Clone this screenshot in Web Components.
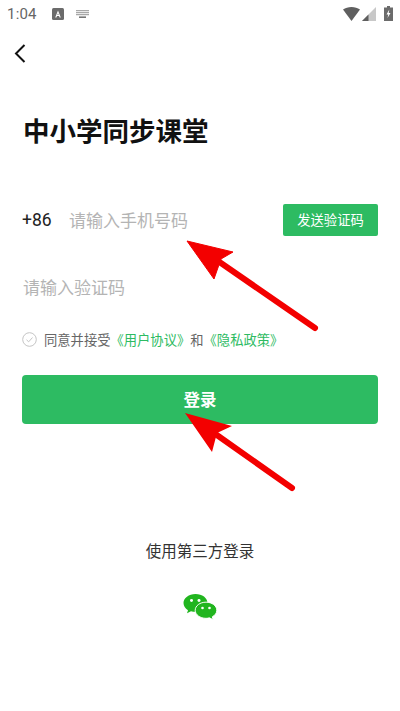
<!DOCTYPE html>
<html lang="zh-CN">
<head>
<meta charset="UTF-8">
<title>中小学同步课堂</title>
<style>
    html, body { margin: 0; background: #fff; }
    body { font-family: "Noto Sans CJK SC", "Roboto", sans-serif; }
</style>
</head>
<body>
<login-screen>
    <status-bar time="1:04"></status-bar>
    <back-bar></back-bar>
    <page-title>中小学同步课堂</page-title>
    <phone-row></phone-row>
    <code-row></code-row>
    <agree-row></agree-row>
    <login-button>登录</login-button>
    <third-party></third-party>
</login-screen>
<arrow-layer></arrow-layer>

<script>
    "use strict";
    function define(name, html, init) {
        customElements.define(name, class extends HTMLElement {
            constructor() {
                super();
                this.attachShadow({ mode: "open" }).innerHTML = html;
            }
            connectedCallback() {
                if (init) init(this);
            }
        });
    }

    define("login-screen", `
        <style>
            :host { display: flex; flex-direction: column; width: 400px; height: 711px; overflow: hidden; }
        </style>
        <slot></slot>`);

    define("status-bar", `
        <style>
            :host { display: flex; align-items: center; height: 27px; padding: 0 7px 0 7px; box-sizing: border-box;
                    font: 15px Roboto, sans-serif; color: #666; }
            #t { width: 45px; letter-spacing: .2px; }
            .right { margin-left: auto; display: flex; align-items: center; }
            svg { display: block; }
        </style>
        <span id="t"></span>
        <svg width="12" height="12" viewBox="0 0 12 12"><rect width="12" height="12" rx="1.5" fill="#6b6b6b"/><path d="M3.2 9.5 6 2.6l2.8 6.9H7.6L7 8H5l-.6 1.5zM5.4 7h1.2L6 5.2z" fill="#fff"/></svg>
        <svg width="15" height="8" viewBox="0 0 15 8" style="margin-left:11px">
            <path d="M1 0h13v1.200H1zM1 2h13v1.200H1zM1 4h13v1.200H1z" fill="#a8a8a8"/>
            <path d="M4 6.400h7V8H4z" fill="#777"/>
        </svg>
        <span class="right">
            <svg width="17" height="14" viewBox="0 0 17 14"><path d="M0 2.500C2.300 .9 5.300 0 8.500 0s6.200 .9 8.500 2.500L8.500 14z" fill="#5f5f5f"/></svg>
            <svg width="14" height="14" viewBox="0 0 14 14" style="margin-left:2px"><path d="M14 0v14H0z" fill="#c8c8c8"/><path d="M6.500 7.500V14H0z" fill="#5f5f5f"/></svg>
            <svg width="9" height="15" viewBox="0 0 9 15" style="margin-left:8px"><path d="M3 0h3v1.500h3V15H0V1.500h3z" fill="#6b6b6b"/><path d="M5.300 3.500 2.500 8.500h1.800L3.500 12l3-5H4.700z" fill="#fff"/></svg>
        </span>`,
        el => { el.shadowRoot.getElementById("t").textContent = el.getAttribute("time"); });

    define("back-bar", `
        <style>
            :host { display: block; height: 53px; padding-left: 14px; }
            svg { display: block; margin-top: 17px; }
        </style>
        <svg width="12" height="19" viewBox="0 0 12 19"><path d="M10.500 1 2 9.500l8.500 8.500" fill="none" stroke="#111" stroke-width="2"/></svg>`);

    define("page-title", `
        <style>
            :host { display: block; padding: 0 0 0 23px; height: 53px; line-height: 53px; margin-top: 23px;
                    font-size: 26.500px; font-weight: 700; color: #111; }
        </style>
        <slot></slot>`);

    define("phone-row", `
        <style>
            :host { display: flex; align-items: center; margin: 48px 22px 0 22px; height: 32px; }
            .cc { width: 47px; font: 17.500px Roboto, sans-serif; color: #222; }
            .ph { flex: 1; font-size: 17px; color: #b4b4b4; padding-bottom: 2px; }
            button { all: unset; width: 95px; height: 32px; line-height: 32px; text-align: center; background: #2dbb62;
                     color: #fff; font-size: 13.300px; border-radius: 2px; }
        </style>
        <span class="cc">+86</span>
        <span class="ph">请输入手机号码</span>
        <button>发送验证码</button>`);

    define("code-row", `
        <style>
            :host { display: block; margin: 35px 0 0 23px; height: 32px; line-height: 32px; font-size: 17px; color: #b4b4b4; }
        </style>
        请输入验证码`);

    define("agree-row", `
        <style>
            :host { display: flex; align-items: center; margin: 26px 0 0 22px; height: 20px; font-size: 13.300px; color: #666; }
            svg { margin-right: 7px; flex: none; }
            a { color: #2dbb62; }
        </style>
        <svg width="15" height="15" viewBox="0 0 15 15"><circle cx="7.500" cy="7.500" r="6.800" fill="none" stroke="#c4c4c4"/><path d="M4.500 7.800l2.200 2 3.800-4.300" fill="none" stroke="#c4c4c4"/></svg>
        <span>同意并接受</span><a>《用户协议》</a><span>和</span><a>《隐私政策》</a>`);

    define("login-button", `
        <style>
            :host { display: block; margin: 26px 22px 0 22px; height: 49px; line-height: 49px; text-align: center; background: #2dbb62;
                    color: #fff; font-size: 16.500px; font-weight: 700; border-radius: 4px; }
        </style>
        <slot></slot>`);

    define("third-party", `
        <style>
            :host { display: flex; flex-direction: column; align-items: center; margin-top: 115px; font-size: 15.500px; color: #333; }
            span { height: 22px; line-height: 22px; }
            svg { display: block; margin-top: 33px; }
        </style>
        <span>使用第三方登录</span>
        <svg width="34" height="26" viewBox="0 0 34 28" preserveAspectRatio="none">
            <path d="M12.500 0C5.800 0 .5 4.300 .5 9.800c0 3.100 1.700 5.800 4.500 7.600L4 20.800l4-2.200c1.400 .4 2.900 .6 4.500 .6 6.700 0 12-4.300 12-9.500C24.500 4.300 19.200 0 12.500 0z" fill="#21b51f"/>
            <path d="M23 8.800c-6 0-10.800 3.900-10.800 8.700S17 26.200 23 26.200c1.200 0 2.400-.2 3.500-.5l3.700 2-.9-3.100c2.800-1.600 4.500-4.200 4.500-7.100 0-4.800-4.800-8.700-10.800-8.700z" fill="#21b51f" stroke="#fff" stroke-width="1"/>
            <circle cx="8.500" cy="7" r="1.500" fill="#fff"/><circle cx="16" cy="7" r="1.500" fill="#fff"/>
            <circle cx="19.500" cy="15" r="1.300" fill="#fff"/><circle cx="26.500" cy="15" r="1.300" fill="#fff"/>
        </svg>`);

    // the red arrows sit on top of the page, so this layer is the absolute one
    define("arrow-layer", `
        <style>
            :host { display: block; position: absolute; left: 0; top: 0; width: 400px; height: 711px; pointer-events: none; }
        </style>
        <svg width="400" height="711" viewBox="0 0 400 711">
            <path d="M187 241 233 252 221 259 214 279z" fill="#f30000" stroke="#f30000" stroke-width="1" stroke-linejoin="round"/>
            <path d="M218 261 315 328" stroke="#f30000" stroke-width="6" stroke-linecap="round" fill="none"/>
            <path d="M185 413 232 426 217 433 212 452z" fill="#f30000"/>
            <path d="M214 433 292 488" stroke="#f30000" stroke-width="6" stroke-linecap="round" fill="none"/>
        </svg>`);
</script>
</body>
</html>
